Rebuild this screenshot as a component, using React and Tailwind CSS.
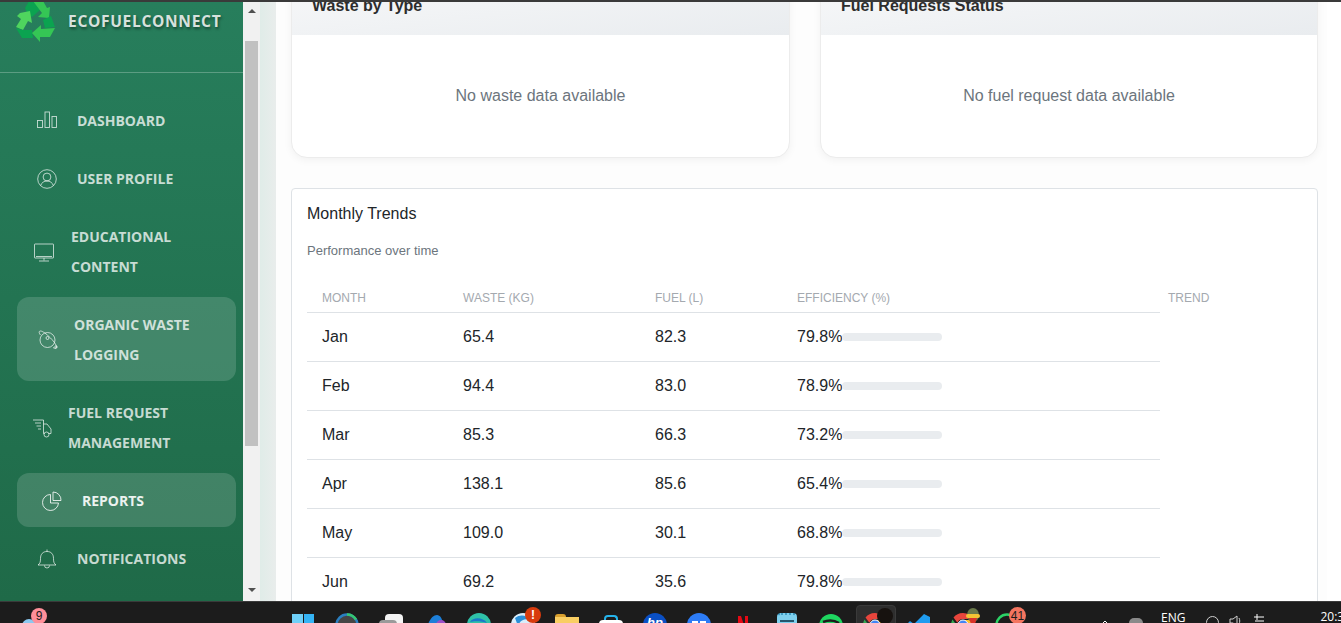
import React from 'react'

const rows = [
  { month: 'Jan', waste: '65.4', fuel: '82.3', eff: '79.8%' },
  { month: 'Feb', waste: '94.4', fuel: '83.0', eff: '78.9%' },
  { month: 'Mar', waste: '85.3', fuel: '66.3', eff: '73.2%' },
  { month: 'Apr', waste: '138.1', fuel: '85.6', eff: '65.4%' },
  { month: 'May', waste: '109.0', fuel: '30.1', eff: '68.8%' },
  { month: 'Jun', waste: '69.2', fuel: '35.6', eff: '79.8%' },
  { month: 'Jul', waste: '72.5', fuel: '41.2', eff: '70.1%' },
]

function Stroke({ children, className = '' }) {
  return (
    <svg viewBox="0 0 20 20" fill="none" stroke="currentColor" strokeWidth="0.9" className={`w-5 h-5 shrink-0 ${className}`}>
      {children}
    </svg>
  )
}

function GraphIcon() {
  return (
    <Stroke>
      <rect x="0.5" y="9.5" width="5" height="7" />
      <rect x="8" y="1" width="4.5" height="15.5" />
      <rect x="15" y="5.5" width="4.5" height="11" />
    </Stroke>
  )
}

function UserIcon() {
  return (
    <Stroke>
      <circle cx="10" cy="10" r="9.3" />
      <circle cx="10" cy="8" r="3.9" />
      <path d="M3.6 16.6c1-3 3.4-4.6 6.4-4.6s5.400 1.600 6.400 4.600" />
    </Stroke>
  )
}

function MonitorIcon() {
  return (
    <Stroke>
      <rect x="0.5" y="2" width="19" height="14" rx="0.5" />
      <path d="M10 16v2.500M5 19h10M2 14.500h16" />
    </Stroke>
  )
}

function PlanetIcon() {
  return (
    <Stroke>
      <circle cx="9.500" cy="10" r="7.500" />
      <circle cx="9.500" cy="8" r="1.500" />
      <path d="M6 12.500h.01M2.500 5C.5 2.500 1 1 2.500 1c2 0 6 3 10 7s6.500 8 6 9.500c-.5 1.300-2 1-3.500 0" />
      <circle cx="18" cy="17" r="1.200" />
    </Stroke>
  )
}

function TruckIcon() {
  return (
    <Stroke>
      <path d="M1 2h10.500v10M3 5h6M4.500 8h4.500M6 11h3" />
      <path d="M11.500 6h3.500l4 5v4.500h-2.500M11.500 12v3.500h1" />
      <circle cx="14.500" cy="16.500" r="2.500" />
    </Stroke>
  )
}

function PieIcon() {
  return (
    <Stroke>
      <path d="M8.500 3.500a8 8 0 1 0 8 8.500H8.500z" />
      <path d="M11 1a8 8 0 0 1 8 8.500h-8z" />
    </Stroke>
  )
}

function BellIcon() {
  return (
    <Stroke>
      <path d="M1 16c2-1.500 2.500-3 2.500-6.500 0-4.500 2.500-7 6.500-7s6.500 2.500 6.500 7c0 3.500.5 5 2.500 6.500z" />
      <path d="M10 .5v2M7.500 16.500a2.500 2.500 0 0 0 5 0" />
    </Stroke>
  )
}

const navItems = [
  { lines: ['DASHBOARD'], icon: <GraphIcon />, pad: 'pl-5', gap: 'gap-5', tone: 'text-white/75' },
  { lines: ['USER PROFILE'], icon: <UserIcon />, pad: 'pl-5', gap: 'gap-5', tone: 'text-white/75' },
  { lines: ['EDUCATIONAL', 'CONTENT'], icon: <MonitorIcon />, pad: 'pl-[17px]', gap: 'gap-[17px]', tone: 'text-white/75' },
  { lines: ['ORGANIC WASTE', 'LOGGING'], icon: <PlanetIcon />, pad: 'pl-[21px]', gap: 'gap-4', active: true, tone: 'text-white/75' },
  { lines: ['FUEL REQUEST', 'MANAGEMENT'], icon: <TruckIcon />, pad: 'pl-[15px]', gap: 'gap-[16px]', tone: 'text-white/75' },
  { lines: ['REPORTS'], icon: <PieIcon />, pad: 'pl-[25px]', gap: 'gap-5', active: true, tone: 'text-white/90' },
  { lines: ['NOTIFICATIONS'], icon: <BellIcon />, pad: 'pl-5', gap: 'gap-5', tone: 'text-white/75' },
]

function NavItem({ item }) {
  return (
    <div className={`flex items-center ml-[17px] w-[219px] pt-[13px] pb-[11px] rounded-xl ${item.pad} ${item.gap} ${item.tone} ${item.active ? 'bg-white/15' : ''}`}>
      {item.icon}
      <div className="text-[14px] leading-[30px] font-bold font-['Open_Sans',sans-serif]">
        {item.lines.map(line => <div key={line}>{line}</div>)}
      </div>
    </div>
  )
}

function RecycleLogo() {
  return (
    <svg viewBox="16 1 40 42" className="w-10 h-[42px] shrink-0">
      <polygon points="25,8 29,1 35,1 40,10 32,17 27,13" fill="#0ba350" />
      <polygon points="33,1 43,1 47,8 50,7 49,18 38,17 42,13" fill="#35c655" />
      <polygon points="20,13 30,11 32,23 28,21 23,30 16,27 21,19 17,16" fill="#4fd45e" />
      <polygon points="16,28 23,30 32,30 33,38 22,38" fill="#0ba350" />
      <polygon points="43,20 51,16 55,27 45,28" fill="#0ba350" />
      <polygon points="55,28 50,37 40,37 40,42 32,33 41,25 41,29" fill="#35c655" />
    </svg>
  )
}

function Sidebar() {
  return (
    <aside className="w-[243px] shrink-0 overflow-hidden bg-gradient-to-b from-[#277e5c] to-[#1f6a48]">
      <div className="h-[72px] border-b border-white/25 flex items-start pl-4 -mt-px">
        <RecycleLogo />
        <span className="ml-3 mt-[10px] text-[15.500px] leading-5 font-bold tracking-[0.7px] text-[#d7e1dd] font-['Open_Sans',sans-serif] [text-shadow:1px_2px_3px_rgba(0,0,0,0.45)]">ECOFUELCONNECT</span>
      </div>
      <nav className="flex flex-col gap-1 mt-[20px]">
        {navItems.map(item => <NavItem key={item.lines[0]} item={item} />)}
      </nav>
    </aside>
  )
}

function ScrollBar() {
  return (
    <div className="w-[17px] shrink-0 bg-[#f1f1f1] flex flex-col items-center">
      <svg viewBox="0 0 8 4" className="w-2 h-1 mt-[7px] fill-[#505050]"><polygon points="0,4 4,0 8,4" /></svg>
      <div className="w-[13px] h-[405px] mt-7 bg-[#c1c1c1]" />
      <svg viewBox="0 0 8 4" className="w-2 h-1 mt-[142px] fill-[#505050]"><polygon points="0,0 8,0 4,4" /></svg>
    </div>
  )
}

function EmptyCard({ title, text }) {
  return (
    <div className="rounded-2xl border border-[#ececec] bg-white overflow-hidden shadow-[0_2px_8px_rgba(0,0,0,0.05)]">
      <div className="h-[63px] pt-[25px] pl-5 text-[16px] leading-[18px] font-bold text-[#2d2d2d] bg-gradient-to-br from-[#f8f9fa] to-[#e9ecef]">{title}</div>
      <div className="h-[122px] flex items-center justify-center text-[16px] text-[#6c757d]">{text}</div>
    </div>
  )
}

function TrendsTable() {
  const th = 'h-[31px] pl-[15px] pb-[6px] text-left align-bottom text-[12px] leading-4 font-normal uppercase text-[#a4a9af]'
  const td = 'h-[49px] pl-[15px] border-b border-[#dee2e6] text-[16px] text-[#212529]'
  return (
    <table className="w-full table-fixed border-collapse">
      <colgroup>
        <col className="w-[141px]" />
        <col className="w-[192px]" />
        <col className="w-[142px]" />
        <col className="w-[378px]" />
        <col />
      </colgroup>
      <thead>
        <tr>
          <th className={`${th} border-b border-[#dee2e6]`}>Month</th>
          <th className={`${th} border-b border-[#dee2e6]`}>Waste (kg)</th>
          <th className={`${th} border-b border-[#dee2e6]`}>Fuel (L)</th>
          <th className={`${th} border-b border-[#dee2e6]`}>Efficiency (%)</th>
          <th className={`${th} !pl-2`}>Trend</th>
        </tr>
      </thead>
      <tbody>
        {rows.map(r => (
          <tr key={r.month}>
            <td className={td}>{r.month}</td>
            <td className={td}>{r.waste}</td>
            <td className={td}>{r.fuel}</td>
            <td className={td}>
              <div className="flex items-center">
                <span>{r.eff}</span>
                <div className="w-[100px] h-2 rounded bg-[#e9ecef]" />
              </div>
            </td>
          </tr>
        ))}
      </tbody>
    </table>
  )
}

function Content() {
  return (
    <main className="flex-1 min-w-0 overflow-hidden bg-[#fdfdfd] flex">
      <div className="w-[1051px] shrink-0 pl-[15px] pr-[9px] -mt-[31px]">
        <div className="grid grid-cols-[499px_498px] gap-[30px]">
          <EmptyCard title="Waste by Type" text="No waste data available" />
          <EmptyCard title="Fuel Requests Status" text="No fuel request data available" />
        </div>
        <div className="mt-[30px] rounded border border-[#dee2e6] bg-white px-[15px] pt-[15px]">
          <h3 className="text-[16px] leading-5 font-normal text-[#212529]">Monthly Trends</h3>
          <p className="mt-[18px] text-[13px] leading-[18px] text-[#6c757d]">Performance over time</p>
          <div className="mt-[21px]">
            <TrendsTable />
          </div>
        </div>
      </div>
      <div className="flex-1 bg-white" />
    </main>
  )
}

function Circle({ fill, children, size = 24 }) {
  return (
    <svg viewBox="0 0 24 24" width={size} height={size}>
      <circle cx="12" cy="12" r="12" fill={fill} />
      {children}
    </svg>
  )
}

function Badge({ className, children }) {
  return <span className={`absolute flex items-center justify-center rounded-full text-[12px] leading-none font-['Liberation_Sans',sans-serif] ${className}`}>{children}</span>
}

function ChromeIcon() {
  return (
    <svg viewBox="0 0 24 24" width="24" height="24">
      <path d="M12 0a12 12 0 0 1 10.400 6H12a6 6 0 0 0-5.600 3.800L2.500 4.500A12 12 0 0 1 12 0z" fill="#e8453c" />
      <path d="M1.500 6.500 7 14a6 6 0 0 0 5 4l-3 6A12 12 0 0 1 1.500 6.500z" fill="#34a853" />
      <path d="M22.500 7H13a6 6 0 0 1 3 7l-6 10A12 12 0 0 0 22.500 7z" fill="#fbc02d" />
      <circle cx="12" cy="12" r="5" fill="#4285f4" stroke="#fff" />
    </svg>
  )
}

function AvatarFace() {
  return (
    <svg viewBox="0 0 16 16" width="16" height="16" className="absolute left-[24px] top-[6px]">
      <ellipse cx="8" cy="7" rx="6" ry="7" fill="#6a7a4a" />
      <rect x="1" y="6" width="14" height="4" rx="2" fill="#f4c534" />
      <path d="M4 10h8l-2 6H6z" fill="#d8332a" />
    </svg>
  )
}

const dockIcons = [
  { id: 'start', top: 'mt-[12px]', el: (
    <div className="grid grid-cols-2 gap-px w-[22px]">
      {[0, 1, 2, 3].map(i => <div key={i} className={`h-[10px] ${i % 2 ? 'bg-[#35b4f5]' : 'bg-[#6fd0f8]'}`} />)}
    </div>
  ) },
  { id: 'search', top: 'mt-[11px]', el: <svg viewBox="0 0 24 24" width="24" height="24"><circle cx="12" cy="12" r="10.500" fill="#454545" stroke="#2b7fc0" strokeWidth="2.500" /><path d="M12 1.500a10.500 10.500 0 0 1 9 5" fill="none" stroke="#35c76f" strokeWidth="2.500" /></svg> },
  { id: 'files', top: 'mt-[12px]', el: (
    <div className="relative w-6 h-6">
      <div className="absolute left-[6px] top-0 w-[18px] h-5 bg-[#f4f4f4] rounded-sm" />
      <div className="absolute left-0 top-[6px] w-[18px] h-5 bg-[#9a9a9a] rounded-sm" />
    </div>
  ) },
  { id: 'copilot', top: 'mt-[13px]', el: <svg viewBox="0 0 24 24" width="24" height="24"><path d="M2 24C3 10 8 0 14 0c4 0 6 6 7 12H12z" fill="#1d7fd8" /><circle cx="18" cy="10" r="5" fill="#9b4fc8" /></svg> },
  { id: 'edge', top: 'mt-[11px]', el: <Circle fill="#2fc1a8"><path d="M3 9c3-5 13-5 17 1-5-2-13-2-17-1z" fill="#1a78c9" /></Circle> },
  { id: 'globe', top: 'mt-[11px]', el: <Circle fill="#d9eefb"><path d="M4 5c5-4 12-3 15 2-5-2-10 0-12 6z" fill="#2a8fd8" /></Circle>, badge: <Badge className="left-[24px] top-[5px] w-4 h-4 bg-[#d83b0d] text-white font-bold">!</Badge> },
  { id: 'folder', top: 'mt-[12px]', el: (
    <div className="w-6">
      <div className="w-[11px] h-[3px] bg-[#d9a02f] rounded-t-sm" />
      <div className="h-5 bg-[#f9ce63]" />
    </div>
  ) },
  { id: 'store', top: 'mt-[13px]', el: (
    <div className="w-6">
      <div className="mx-auto w-[14px] h-[5px] border-2 border-b-0 border-[#25b3ea] rounded-t-sm" />
      <div className="h-5 bg-white rounded-sm" />
    </div>
  ) },
  { id: 'hp', top: 'mt-[11px]', el: (
    <div className="w-6 h-6 rounded-full bg-[#0a4fc4] text-white text-[13px] italic font-bold text-center leading-[20px] font-['Liberation_Sans',sans-serif]">hp</div>
  ) },
  { id: 'zoom', top: 'mt-[11px]', el: <Circle fill="#2d7cf6"><rect x="5" y="8" width="6" height="4" fill="#fff" /><rect x="13" y="8" width="6" height="4" fill="#fff" /></Circle> },
  { id: 'netflix', top: 'mt-[14px]', el: (
    <svg viewBox="0 0 12 20" width="12" height="20"><path d="M1 0h3l4 12V0h3v20H8L4 8v12H1z" fill="#e50914" /></svg>
  ) },
  { id: 'notes', top: 'mt-[11px]', el: (
    <div className="w-5 h-6 rounded-sm bg-[#7ed0ee] pt-[5px] border-t-2 border-dotted border-[#3e9cc4]">
      <div className="mx-[3px] h-[2px] bg-[#24566e]" />
    </div>
  ) },
  { id: 'spotify', top: 'mt-[12px]', el: <Circle fill="#1ed760"><path d="M4 8c5-2 11-2 16 1" stroke="#1c1c1c" strokeWidth="2.500" fill="none" /></Circle> },
  { id: 'chrome', top: 'mt-[11px]', active: true, el: <ChromeIcon />, badge: <span className="absolute left-[24px] top-[6px] w-4 h-4 rounded-full bg-[#17120f]" /> },
  { id: 'vscode', top: 'mt-[12px]', el: <svg viewBox="0 0 24 24" width="24" height="24"><path d="M17 0l6 3v18l-6 3L7 14l-4 3-2-2 4-3-4-3 2-2 4 3z" fill="#1f9cf0" /></svg> },
  { id: 'chrome2', top: 'mt-[11px]', el: <ChromeIcon />, badge: <AvatarFace /> },
  { id: 'whatsapp', top: 'mt-[11px]', el: <svg viewBox="0 0 24 24" width="24" height="24"><circle cx="12" cy="12" r="10.500" fill="none" stroke="#2bd366" strokeWidth="2.500" /></svg>, badge: <Badge className="left-[24px] top-[5px] w-[17px] h-[17px] bg-[#f47560] text-[#1c1c1c]">41</Badge> },
]

function Taskbar() {
  return (
    <footer className="h-[22px] shrink-0 bg-[#1c1c1c] border-t border-[#3a3a3a] flex overflow-hidden text-white font-['Open_Sans',sans-serif]">
      <div className="w-[281px] shrink-0 relative">
        <span className="absolute left-[22px] top-[17px] w-[14px] h-[14px] rounded-full bg-[#8cc8f0]" />
        <Badge className="left-[31px] top-[6px] w-4 h-4 bg-[#ff8f99] text-[#1c1c1c]">9</Badge>
      </div>
      <div className="flex">
        {dockIcons.map(icon => (
          <div key={icon.id} className="w-[44px] h-[21px] relative flex justify-center">
            {icon.active && <span className="absolute left-[3px] top-[3px] w-10 h-7 rounded bg-[#2e2e2e] border border-[#3a3a3a]" />}
            <div className={`relative ${icon.top}`}>{icon.el}</div>
            {icon.badge}
          </div>
        ))}
      </div>
      <div className="flex-1 flex items-start relative">
        <svg viewBox="0 0 8 4" className="w-2 h-1 ml-[72px] mt-[19px] stroke-white fill-none"><path d="M0 4l4-4 4 4" /></svg>
        <span className="ml-[20px] mt-[16px] w-[14px] h-[10px] rounded-full bg-[#8a8a8a]" />
        <span className="ml-[18px] mt-[9px] text-[12px] leading-[14px]">ENG</span>
        <span className="ml-[21px] mt-[14px] w-[13px] h-[13px] rounded-full border border-[#cfcfcf]" />
        <svg viewBox="0 0 14 12" className="ml-[10px] mt-[13px] w-[14px] h-3 stroke-[#cfcfcf] fill-none"><path d="M1 4h3l4-3v10L4 8H1zM10 3c1 2 1 4 0 6" /></svg>
        <svg viewBox="0 0 14 12" className="ml-[9px] mt-[11px] w-[14px] h-3 stroke-white fill-none"><path d="M5 1v6M2 4h10M3 8h9" /></svg>
        <span className="ml-[54px] mt-[7px] text-[12px] leading-[16px]">20:30</span>
      </div>
    </footer>
  )
}

export default function App() {
  return (
    <div className="w-[1341px] h-[623px] flex flex-col overflow-hidden bg-white font-['Liberation_Sans',Arial,sans-serif]">
      <div className="h-[2px] shrink-0 bg-[#3a3a3a]" />
      <div className="flex-1 min-h-0 flex">
        <Sidebar />
        <ScrollBar />
        <div className="w-4 shrink-0 bg-gradient-to-r from-[#e0ece8] to-[#e9edec]" />
        <Content />
      </div>
      <Taskbar />
    </div>
  )
}
